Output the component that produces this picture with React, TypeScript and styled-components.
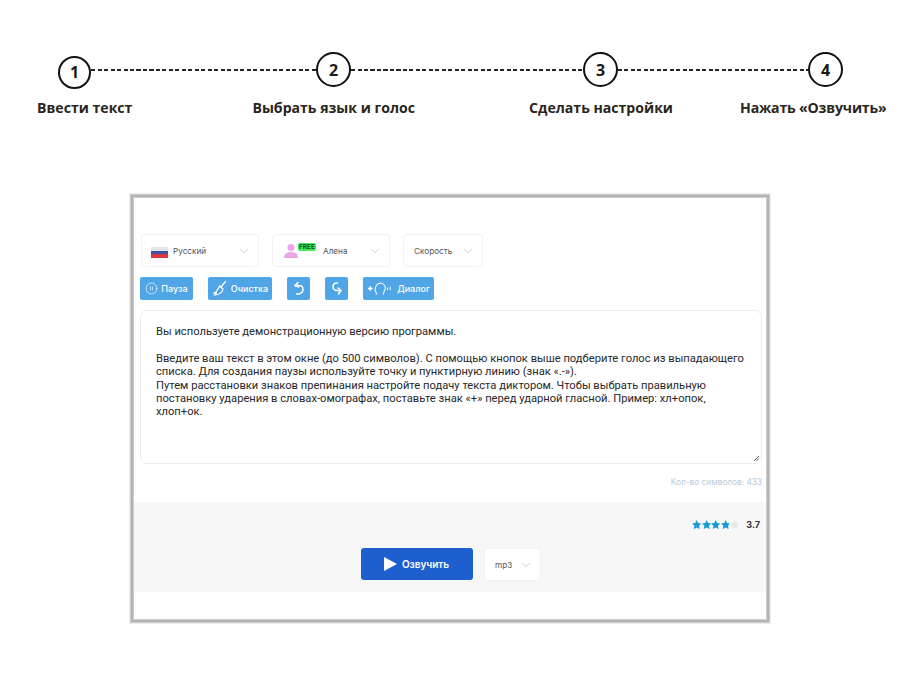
import React from 'react';
import styled, { createGlobalStyle } from 'styled-components';
import { ChevronDown, CirclePause } from 'lucide-react';

const GlobalStyle = createGlobalStyle`
  html, body {
    margin: 0;
    padding: 0;
    background: #fff;
  }
  body {
    width: 900px;
    height: 675px;
    overflow: hidden;
    font-family: Inter, "Liberation Sans", sans-serif;
  }
`;

const Page = styled.div`
  width: 900px;
  height: 675px;
  display: flex;
  flex-direction: column;
`;

const Stepper = styled.div`
  height: 194px;
  flex-shrink: 0;
  display: flex;
  flex-direction: column;
`;

const StepTrack = styled.div`
  display: flex;
  align-items: center;
  height: 35px;
  margin-top: 52px;
  padding-left: 58px;
`;

const StepCircle = styled.div<{ $first?: boolean }>`
  width: ${({ $first }) => ($first ? 33 : 35)}px;
  height: ${({ $first }) => ($first ? 33 : 35)}px;
  margin-top: ${({ $first }) => ($first ? 5 : 0)}px;
  box-sizing: border-box;
  flex-shrink: 0;
  border: 2.5px solid #111;
  border-radius: 50%;
  display: flex;
  align-items: center;
  justify-content: center;
  font-family: "Open Sans", sans-serif;
  font-weight: 700;
  font-size: 16px;
  color: #1a1a1a;
`;

const StepLine = styled.div<{ $width: number }>`
  width: ${({ $width }) => $width}px;
  height: 2px;
  flex-shrink: 0;
  background: repeating-linear-gradient(90deg, #2a2420 0 4px, transparent 4px 6.5px);
`;

const StepLabels = styled.div`
  display: flex;
  margin-top: 11px;
  font-family: "Open Sans", sans-serif;
  font-weight: 700;
  font-size: 14.1px;
  line-height: 20px;
  color: #2b2521;
  white-space: nowrap;
`;

const StepLabel = styled.div<{ $left: number; $tight?: boolean }>`
  margin-left: ${({ $left }) => $left}px;
  letter-spacing: ${({ $tight }) => ($tight ? '-0.17px' : 'normal')};
`;

const Panel = styled.div`
  margin-left: 130px;
  width: 640px;
  height: 429px;
  box-sizing: border-box;
  border: 1px solid #cfcfcf;
  box-shadow: 0 0 0 1px #ececec, inset 0 0 0 1px #b0b0b0, inset 0 0 0 2px #b6b6b6,
    inset 0 0 0 3px #cccccc;
  padding: 39px 3px 0;
  display: flex;
  flex-direction: column;
`;

const SelectRow = styled.div`
  display: flex;
  gap: 13px;
  padding-left: 7px;
`;

const Select = styled.div<{ $width: number }>`
  width: ${({ $width }) => $width}px;
  height: 33px;
  box-sizing: border-box;
  border: 1px solid #f2f2f2;
  border-radius: 4px;
  background: #fff;
  display: flex;
  align-items: center;
  padding: 0 7px 0 10px;
  font-size: 8.2px;
  color: #555;
  gap: 5px;

  svg.chevron {
    margin-left: auto;
    color: #b4b8bd;
  }
`;

const Flag = styled.div`
  width: 17px;
  height: 11px;
  margin-top: 3px;
  margin-left: -1px;
  background: linear-gradient(#e6e6ea 0 33%, #3a55a8 33% 66%, #d9383f 66% 100%);
`;

const FreeBadge = styled.span`
  background: #45e85c;
  border-radius: 2px;
  color: #0d4d12;
  font-size: 6.5px;
  font-weight: 700;
  padding: 0 1px;
  line-height: 8px;
  margin: -7px 2px 0 -6px;
`;

const ButtonRow = styled.div`
  display: flex;
  gap: 15px;
  padding-left: 6px;
  margin-top: 10px;
`;

const ToolButton = styled.div<{ $width: number }>`
  width: ${({ $width }) => $width}px;
  height: 23px;
  border-radius: 2px;
  background: #4fa5e6;
  color: #fff;
  display: flex;
  align-items: center;
  justify-content: center;
  gap: 3px;
  font-size: 9px;
  font-weight: 500;
`;

const TextBox = styled.div`
  margin: 10px 4px 0 6px;
  height: 154px;
  box-sizing: border-box;
  border: 1px solid #ebebeb;
  border-radius: 7px;
  padding: 14px 15px 0;
  position: relative;
  font-family: Roboto, sans-serif;
  font-size: 11.18px;
  line-height: 13.4px;
  color: #26282b;
  white-space: pre-line;
`;

const ResizeGrip = styled.svg`
  position: absolute;
  right: 1px;
  bottom: 1px;
`;

const Counter = styled.div`
  margin-top: 12px;
  height: 12px;
  padding-right: 4px;
  text-align: right;
  font-size: 8.3px;
  line-height: 12px;
  color: #b5cbdc;
`;

const Footer = styled.div`
  margin-top: 14px;
  height: 90px;
  background: #f7f7f7;
  display: flex;
  flex-direction: column;
`;

const Rating = styled.div`
  display: flex;
  align-items: center;
  justify-content: flex-end;
  gap: 7px;
  padding: 16px 6px 0 0;
  height: 13px;
  font-size: 9px;
  font-weight: 700;
  color: #333;
`;

const Stars = styled.div`
  display: flex;
`;

const ActionRow = styled.div`
  display: flex;
  gap: 11px;
  margin-top: 17px;
  padding-left: 227px;
`;

const SpeakButton = styled.div`
  width: 112px;
  height: 32px;
  border-radius: 3px;
  background: #1e5fd0;
  color: #fff;
  display: flex;
  align-items: center;
  justify-content: center;
  gap: 5px;
  padding-right: 2px;
  box-sizing: border-box;
  font-size: 10px;
  font-weight: 600;
`;

const Star = ({ fill }: { fill: number }) => (
  <svg width="9.4" height="9.4" viewBox="1 1 22 22">
    <defs>
      <linearGradient id={`star${fill}`}>
        <stop offset={fill} stopColor="#1a9ad6" />
        <stop offset={fill} stopColor="#e8e8e8" />
      </linearGradient>
    </defs>
    <path d="M12 1l3.400 7.300 7.600.9-5.600 5.300 1.500 7.900L12 18.500 5.100 22.400l1.500-7.900L1 9.200l7.600-.9z" fill={`url(#star${fill})`} />
  </svg>
);

const Person = () => (
  <svg width="16" height="16" viewBox="0 0 16 16" fill="#eaa4e8">
    <circle cx="8" cy="4.500" r="3.500" />
    <path d="M1 15c0-4 3-6 7-6s7 2 7 6z" />
  </svg>
);

const BroomIcon = () => (
  <svg width="16" height="17" viewBox="0 0 16 17" fill="none" stroke="#fff" strokeWidth="1.200" strokeLinecap="round">
    <path d="M13.500 1.500L9 7" />
    <path d="M7.500 6l3.500 3c-.5 3-3 5.500-8 6 .8-.8 1.200-1.500 1.300-2.300-1 .6-2 .8-3 .8C4 12.500 6 9.500 7.500 6z" />
  </svg>
);

const UndoIcon = () => (
  <svg width="14" height="15" viewBox="0 0 14 15" fill="none" stroke="#fff" strokeWidth="1.500" strokeLinecap="round" strokeLinejoin="round">
    <path d="M6 1.500L3 4.500l3.500 1.500" />
    <path d="M3 4.500h4c2.500 0 4 1.800 4 4s-1.800 4.500-4.500 4.500H4.500" />
  </svg>
);

const RedoIcon = () => (
  <svg width="14" height="15" viewBox="0 0 14 15" fill="none" stroke="#fff" strokeWidth="1.500" strokeLinecap="round" strokeLinejoin="round">
    <path d="M7.500 2H7C4.500 2 3 3.800 3 5.800S4.800 9.500 7 9.500h4" />
    <path d="M8 7l3 2.500-2.500 3.500" />
  </svg>
);

const DialogIcon = () => (
  <svg width="27" height="17" viewBox="0 0 29 17" fill="none" stroke="#fff" strokeWidth="1.100">
    <path d="M1 8.500h5M3.500 6v5" strokeWidth="1.700" />
    <path d="M11 15c-1.500-2-3-4-2-7.500C10 4 13 2 16 3c3 1 4 4 3.500 6-.8 1.500-1.500 3-2 6" />
    <path d="M22 7.500v2.500M25 6.500v4" />
  </svg>
);

const steps = [
  { label: 'Ввести текст', left: 37 },
  { label: 'Выбрать язык и голос', left: 120 },
  { label: 'Сделать настройки', left: 114 },
  { label: 'Нажать «Озвучить»', left: 67, tight: true },
];

const textValue = `Вы используете демонстрационную версию программы.

Введите ваш текст в этом окне (до 500 символов). С помощью кнопок выше подберите голос из выпадающего
списка. Для создания паузы используйте точку и пунктирную линию (знак «.-»).
Путем расстановки знаков препинания настройте подачу текста диктором. Чтобы выбрать правильную
постановку ударения в словах-омографах, поставьте знак «+» перед ударной гласной. Пример: хл+опок,
хлоп+ок.`;

const App: React.FC = () => {
  return (
    <Page>
      <GlobalStyle />
      <Stepper>
        <StepTrack>
          <StepCircle $first>1</StepCircle>
          <StepLine $width={225} />
          <StepCircle>2</StepCircle>
          <StepLine $width={232} />
          <StepCircle>3</StepCircle>
          <StepLine $width={190} />
          <StepCircle>4</StepCircle>
        </StepTrack>
        <StepLabels>
          {steps.map((s) => (
            <StepLabel key={s.label} $left={s.left} $tight={s.tight}>{s.label}</StepLabel>
          ))}
        </StepLabels>
      </Stepper>

      <Panel>
        <SelectRow>
          <Select $width={118}>
            <Flag />
            Русский
            <ChevronDown className="chevron" size={14} strokeWidth={1.2} />
          </Select>
          <Select $width={118}>
            <Person />
            <FreeBadge>FREE</FreeBadge>
            Алена
            <ChevronDown className="chevron" size={14} strokeWidth={1.2} />
          </Select>
          <Select $width={80}>
            Скорость
            <ChevronDown className="chevron" size={14} strokeWidth={1.2} />
          </Select>
        </SelectRow>

        <ButtonRow>
          <ToolButton $width={53}>
            <CirclePause size={13} strokeWidth={1.2} />
            Пауза
          </ToolButton>
          <ToolButton $width={64}>
            <BroomIcon />
            Очистка
          </ToolButton>
          <ToolButton $width={23}>
            <UndoIcon />
          </ToolButton>
          <ToolButton $width={23}>
            <RedoIcon />
          </ToolButton>
          <ToolButton $width={71}>
            <DialogIcon />
            Диалог
          </ToolButton>
        </ButtonRow>

        <TextBox>
          {textValue}
          <ResizeGrip width="7" height="7" viewBox="0 0 7 7">
            <path d="M6 1L1 6M6 3.500L3.500 6" stroke="#666" strokeWidth="1" />
          </ResizeGrip>
        </TextBox>

        <Counter>Кол-во символов: 433</Counter>

        <Footer>
          <Rating>
            <Stars>
              <Star fill={1} />
              <Star fill={1} />
              <Star fill={1} />
              <Star fill={0.85} />
              <Star fill={0} />
            </Stars>
            3.7
          </Rating>
          <ActionRow>
            <SpeakButton>
              <svg width="14" height="14" viewBox="0 0 14 14"><path d="M1 0l13 7-13 7z" fill="#fff" /></svg>
              Озвучить
            </SpeakButton>
            <Select $width={57}>
              mp3
              <ChevronDown className="chevron" size={14} strokeWidth={1.2} />
            </Select>
          </ActionRow>
        </Footer>
      </Panel>
    </Page>
  );
};

export default App;
